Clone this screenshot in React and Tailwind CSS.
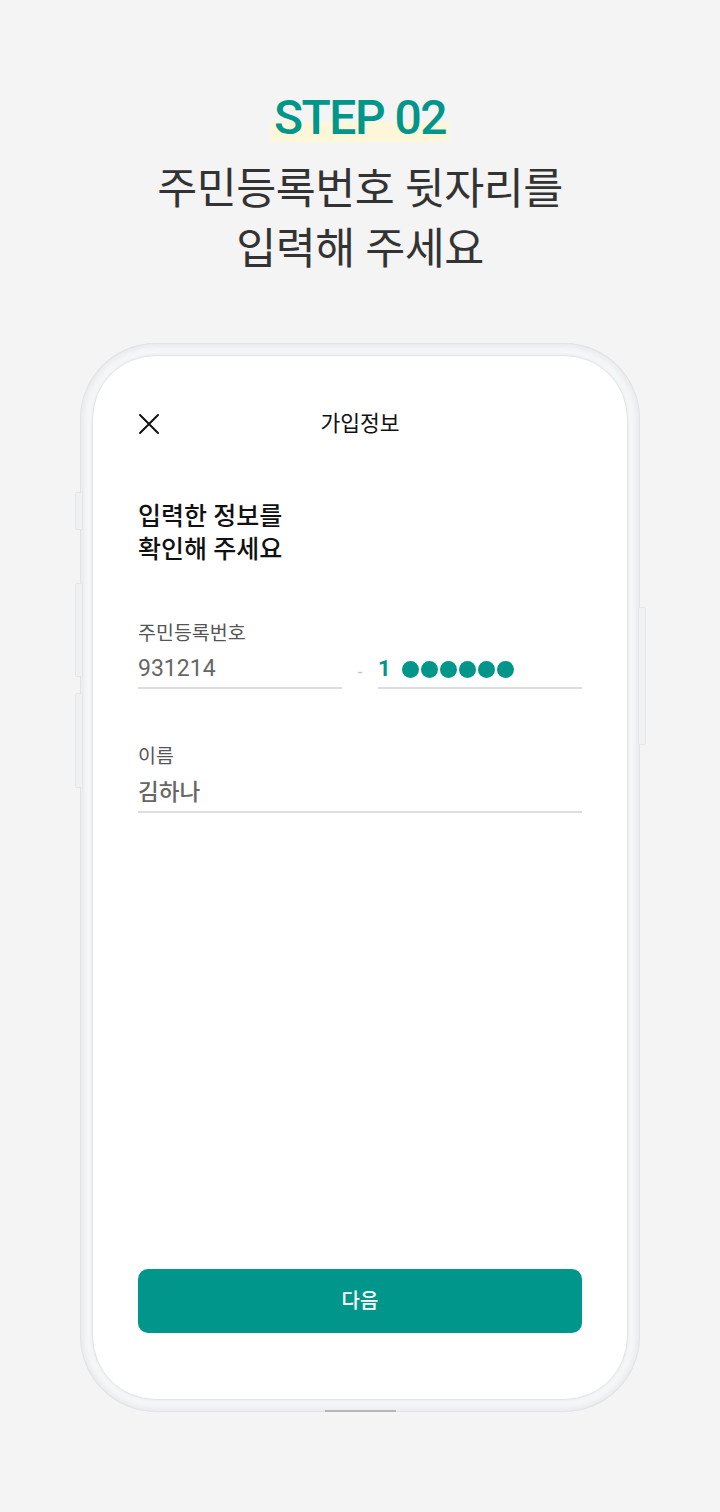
import React from 'react';

const font = { fontFamily: 'Roboto, "Noto Sans CJK KR", sans-serif' };

const CloseIcon = () => (
  <svg width="22" height="22" viewBox="0 0 22 22" fill="none">
    <path d="M2 2L20 20M20 2L2 20" stroke="#111" strokeWidth="2" strokeLinecap="round" />
  </svg>
);

const Field = ({ label, children, className = '' }) => (
  <div className={className}>
    <div className="text-[19.5px] leading-[26px] text-[#555]">{label}</div>
    {children}
  </div>
);

const SideKey = ({ className }) => (
  <div className={`absolute w-[8px] bg-[#f0f1f3] border border-[#e4e6e9] ${className}`} />
);

export default function App() {
  return (
    <div className="min-h-[1512px] w-full bg-[#f4f4f4] flex flex-col items-center" style={font}>
      <div className="mt-[88px] h-[60px] flex items-center justify-center">
        <span className="px-[3px] text-[48px] font-medium leading-none tracking-[-1.5px] text-[#00968a] bg-[linear-gradient(transparent_58%,#fdf6d8_58%)]">
          STEP 02
        </span>
      </div>
      <h1 className="mt-[12px] text-center text-[43.5px] leading-[60px] font-normal text-[#333] tracking-[-0.5px]">
        주민등록번호 뒷자리를
        <br />
        입력해 주세요
      </h1>

      <div className="relative mt-[63px] w-[560px] h-[1069px] rounded-[76px] bg-[#f6f7f8] p-[12px] shadow-[inset_0_0_0_1px_#e2e3e6,inset_0_0_6px_3px_#e6e7ea]">
        {/* side buttons */}
        <SideKey className="left-[-5px] top-[149px] h-[38px] rounded-l-[2px]" />
        <SideKey className="left-[-5px] top-[240px] h-[94px] rounded-l-[2px]" />
        <SideKey className="left-[-5px] top-[350px] h-[95px] rounded-l-[2px]" />
        <SideKey className="right-[-6px] top-[264px] h-[138px] rounded-r-[2px]" />
        <div className="absolute left-[245px] bottom-0 w-[71px] h-[2px] bg-[#b5b5b5]" />

        <div className="h-full w-full rounded-[64px] bg-white border border-[#dfe6e6] shadow-[0_0_3px_1px_#eceef0] flex flex-col px-[45px]">
          <div className="mt-[40px] h-[56px] grid grid-cols-[40px_1fr_40px] items-center">
            <CloseIcon />
            <div className="text-center text-[21.5px] text-[#111]">가입정보</div>
            <div />
          </div>

          <div className="mt-[48px] text-[25px] leading-[33px] font-medium text-[#111]">
            입력한 정보를
            <br />
            확인해 주세요
          </div>

          <Field label="주민등록번호" className="mt-[55px]">
            <div className="mt-[7px] flex items-center">
              <div className="w-[204px] h-[35px] pb-[3px] border-b-2 border-[#dedede] text-[23px] leading-[30px] font-normal text-[#666]">
                931214
              </div>
              <div className="w-[36px] text-center text-[18px] text-[#c8c8c8]">-</div>
              <div className="w-[204px] h-[35px] pb-[3px] border-b-2 border-[#dedede] flex items-center gap-[11px]">
                <span className="text-[22px] leading-[30px] font-bold text-[#00968a]">1</span>
                <div className="flex gap-[2px]">
                  {[0, 1, 2, 3, 4, 5].map((i) => (
                    <span key={i} className="w-[17px] h-[17px] rounded-full bg-[#00968a]" />
                  ))}
                </div>
              </div>
            </div>
          </Field>

          <Field label="이름" className="mt-[55px]">
            <div className="mt-[7px] h-[36px] pb-[3px] border-b-2 border-[#dedede] text-[22.5px] leading-[30px] font-medium text-[#666]">
              김하나
            </div>
          </Field>

          <div className="flex-1" />

          <button className="mb-[66px] h-[64px] w-full rounded-[10px] bg-[#00968c] text-white text-[20px] font-medium">
            다음
          </button>
        </div>
      </div>
    </div>
  );
}
